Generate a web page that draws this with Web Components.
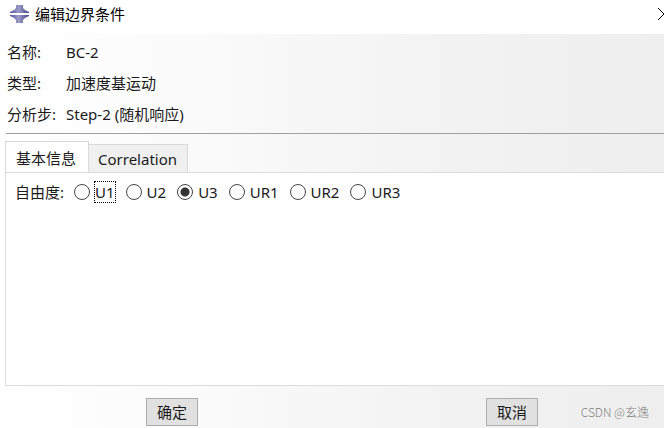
<!DOCTYPE html>
<html lang="zh-CN">
<head>
<meta charset="utf-8">
<title>编辑边界条件</title>
<style>
    body {
        margin: 0;
        overflow: hidden;
        background: #fff;
        color: #1a1a1a;
        font: 15px/20px "Noto Sans", "Noto Sans CJK SC", sans-serif;
    }
</style>
</head>
<body>
<edit-dialog heading="编辑边界条件">
    <info-row label="名称:">BC-2</info-row>
    <info-row label="类型:">加速度基运动</info-row>
    <info-row label="分析步:">Step-2 (随机响应)</info-row>
    <tab-box slot="tabs" tabs="基本信息,Correlation">
        <radio-set label="自由度:" options="U1,U2,U3,UR1,UR2,UR3" value="U3" current="U1"></radio-set>
    </tab-box>
    <dialog-button slot="actions">确定</dialog-button>
    <dialog-button slot="actions">取消</dialog-button>
</edit-dialog>
<water-mark>CSDN @玄逸</water-mark>

<script>
const attach = (el, html) => {
    const template = document.createElement('template');
    template.innerHTML = html;
    el.attachShadow({ mode: 'open' }).append(template.content.cloneNode(true));
};

class EditDialog extends HTMLElement {
    constructor() {
        super();
        attach(this, `
        <style>
            /* the window runs a little past the right edge of the screen */
            :host {
                display: flex;
                flex-direction: column;
                min-height: 100vh;
                margin-right: -18px;
            }

            header {
                display: flex;
                align-items: center;
                height: 28px;
                padding: 0 12px 6px 10px;
                color: #000;
            }

            h1 {
                flex: 1;
                margin: 0 0 0 6px;
                font: inherit;
            }

            .close {
                display: flex;
                padding: 0;
                border: 0;
                background: none;
            }

            main {
                flex: 1;
                display: flex;
                flex-direction: column;
                background: linear-gradient(90deg, #fff, #fafafa 32%, #f3f3f3 62%, #eee);
            }

            .info {
                display: grid;
                gap: 11px;
                padding: 8px 7px;
            }

            hr {
                width: calc(100% - 6px);
                height: 1px;
                margin: 1px 0 7px 6px;
                border: 0;
                background: #a0a0a0;
            }

            footer {
                display: grid;
                grid-template-columns: 1fr 1fr;
                justify-items: center;
                padding: 12px 0 2px 2px;
            }
        </style>
        <header>
            <svg width="19" height="20" viewBox="0 0 19 20" aria-hidden="true">
                <defs>
                    <linearGradient id="steel">
                        <stop offset="0" stop-color="#55559a"/>
                        <stop offset=".45" stop-color="#9c9cc8"/>
                        <stop offset="1" stop-color="#45458c"/>
                    </linearGradient>
                </defs>
                <path fill="url(#steel)" d="M6 1H13V4L15 6L19 8V9H0V8L4 6L6 4ZM0 11H19V12L15 14L13 16V19H6V16L4 14L0 12Z"/>
            </svg>
            <h1></h1>
            <button class="close" aria-label="关闭">
                <svg width="12" height="12" viewBox="0 0 12 12"><path d="M0 0L12 12M12 0L0 12" stroke="#000"/></svg>
            </button>
        </header>
        <main>
            <div class="info"><slot></slot></div>
            <hr>
            <slot name="tabs"></slot>
            <footer><slot name="actions"></slot></footer>
        </main>`);
    }

    connectedCallback() {
        this.shadowRoot.querySelector('h1').textContent = this.getAttribute('heading');
    }
}

class InfoRow extends HTMLElement {
    constructor() {
        super();
        attach(this, `
        <style>
            :host {
                display: grid;
                grid-template-columns: 59px 1fr;
                white-space: nowrap;
            }
        </style>
        <span class="label"></span>
        <span><slot></slot></span>`);
    }

    connectedCallback() {
        this.shadowRoot.querySelector('.label').textContent = this.getAttribute('label');
    }
}

class TabBox extends HTMLElement {
    constructor() {
        super();
        attach(this, `
        <style>
            :host {
                flex: 1;
                display: flex;
                flex-direction: column;
                margin: 0 5px;
            }

            .tabs {
                display: flex;
                align-items: flex-end;
            }

            .tabs button {
                height: 28px;
                padding: 0 10px 0 9px;
                border: 1px solid #d9d9d9;
                border-width: 1px 1px 0 0;
                background: #f0f0f0;
                color: inherit;
                font: inherit;
            }

            .tabs button[aria-selected=true] {
                height: 32px;
                margin-bottom: -1px;
                padding: 0 12px 0 10px;
                border-left-width: 1px;
                background: #fff;
            }

            .panel {
                flex: 1;
                padding: 9px;
                border: 1px solid #dcdcdc;
                background: #fff;
            }
        </style>
        <div class="tabs" role="tablist"></div>
        <div class="panel" role="tabpanel"><slot></slot></div>`);
    }

    connectedCallback() {
        const list = this.shadowRoot.querySelector('.tabs');
        list.innerHTML = this.getAttribute('tabs').split(',')
            .map((tab, i) => `<button role="tab" aria-selected="${i === 0}">${tab}</button>`)
            .join('');
    }
}

class RadioSet extends HTMLElement {
    constructor() {
        super();
        attach(this, `
        <style>
            :host {
                display: block;
            }

            .set {
                display: flex;
                align-items: center;
                gap: 10px;
                white-space: nowrap;
            }

            label {
                display: flex;
                align-items: center;
                gap: 4px;
            }

            input {
                appearance: none;
                width: 16px;
                height: 16px;
                margin: 0;
                border: 1px solid #444;
                border-radius: 50%;
                background: #fff;
            }

            input:checked {
                background: radial-gradient(circle, #333 4px, #fff 5px);
            }

            label span {
                margin: -1px 0;
                border: 1px solid transparent;
            }

            .current span {
                border: 1px dotted #000;
            }
        </style>
        <div class="set" role="radiogroup"></div>`);
    }

    connectedCallback() {
        const label = this.getAttribute('label');
        const value = this.getAttribute('value');
        const current = this.getAttribute('current');
        const set = this.shadowRoot.querySelector('.set');
        set.setAttribute('aria-label', label);
        set.innerHTML = `<span>${label}</span>` + this.getAttribute('options').split(',')
            .map(name => `<label class="${name === current ? 'current' : ''}">
                <input type="radio" name="dof" value="${name}" ${name === value ? 'checked' : ''}>
                <span>${name}</span>
            </label>`)
            .join('');
    }
}

class DialogButton extends HTMLElement {
    constructor() {
        super();
        attach(this, `
        <style>
            :host {
                display: block;
            }

            button {
                display: block;
                height: 28px;
                padding: 0 10px;
                border: 1px solid #adadad;
                background: #e1e1e1;
                color: inherit;
                font: inherit;
            }
        </style>
        <button><slot></slot></button>`);
    }
}

class WaterMark extends HTMLElement {
    constructor() {
        super();
        attach(this, `
        <style>
            :host {
                position: absolute;
                right: 15px;
                bottom: 6px;
                color: #808080;
                font: 300 12px/20px "Noto Sans CJK SC", sans-serif;
            }
        </style>
        <slot></slot>`);
    }
}

customElements.define('edit-dialog', EditDialog);
customElements.define('info-row', InfoRow);
customElements.define('tab-box', TabBox);
customElements.define('radio-set', RadioSet);
customElements.define('dialog-button', DialogButton);
customElements.define('water-mark', WaterMark);
</script>
</body>
</html>
